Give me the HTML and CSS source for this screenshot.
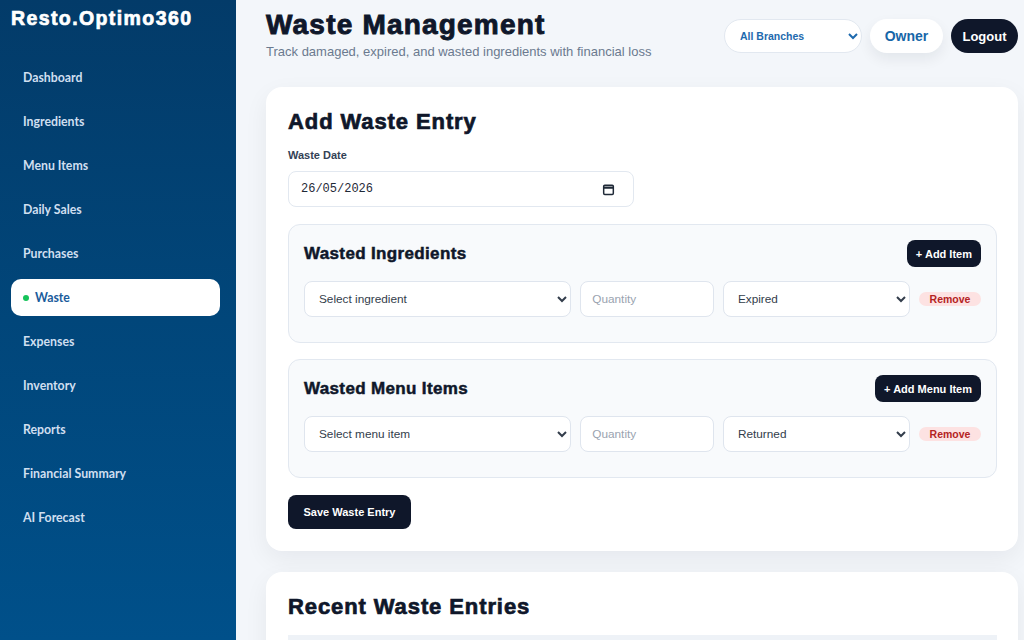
FILE: index.html
```html
<!DOCTYPE html>
<html lang="en">
<head>
    <meta charset="UTF-8">
    <meta name="viewport" content="width=device-width, initial-scale=1.0">
    <title>Waste Management - Resto.Optimo360</title>
    <link rel="stylesheet" href="styles.css">
</head>
<body>
    <aside class="sidebar">
        <div class="logo">Resto.Optimo360</div>
        <nav>
            <ul>
                <li><a href="#">Dashboard</a></li>
                <li><a href="#">Ingredients</a></li>
                <li><a href="#">Menu Items</a></li>
                <li><a href="#">Daily Sales</a></li>
                <li><a href="#">Purchases</a></li>
                <li><a href="#" class="active"><span class="dot"></span>Waste</a></li>
                <li><a href="#">Expenses</a></li>
                <li><a href="#">Inventory</a></li>
                <li><a href="#">Reports</a></li>
                <li><a href="#">Financial Summary</a></li>
                <li><a href="#">AI Forecast</a></li>
            </ul>
        </nav>
    </aside>
    <main class="main">
        <header class="topbar">
            <div class="title-block">
                <h1>Waste Management</h1>
                <p>Track damaged, expired, and wasted ingredients with financial loss</p>
            </div>
            <div class="top-actions">
                <select class="branch-select">
                    <option>All Branches</option>
                </select>
                <span class="role-pill">Owner</span>
                <button class="btn-dark logout">Logout</button>
            </div>
        </header>

        <section class="card">
            <h2>Add Waste Entry</h2>
            <label class="field-label" for="waste-date">Waste Date</label>
            <div class="date-input">
                <input type="text" id="waste-date" value="26/05/2026">
                <svg width="13" height="13" viewBox="0 0 14 14" fill="none" stroke="#1f2937" stroke-width="1.6">
                    <rect x="1.8" y="2.3" width="10.4" height="10" rx="1.2"/>
                    <line x1="1.8" y1="5" x2="12.2" y2="5" stroke-width="2.4"/>
                </svg>
            </div>

            <div class="sub-box">
                <div class="sub-head">
                    <h3>Wasted Ingredients</h3>
                    <button class="btn-dark btn-small">+ Add Item</button>
                </div>
                <div class="entry-row">
                    <select class="field"><option>Select ingredient</option></select>
                    <input type="number" class="field" placeholder="Quantity">
                    <select class="field"><option>Expired</option></select>
                    <span class="remove">Remove</span>
                </div>
            </div>

            <div class="sub-box">
                <div class="sub-head">
                    <h3>Wasted Menu Items</h3>
                    <button class="btn-dark btn-small">+ Add Menu Item</button>
                </div>
                <div class="entry-row">
                    <select class="field"><option>Select menu item</option></select>
                    <input type="number" class="field" placeholder="Quantity">
                    <select class="field"><option>Returned</option></select>
                    <span class="remove">Remove</span>
                </div>
            </div>

            <button class="btn-dark save">Save Waste Entry</button>
        </section>

        <section class="card">
            <h2>Recent Waste Entries</h2>
            <div class="table-head"></div>
        </section>
    </main>
</body>
</html>
```

FILE: styles.css
```css
* {
    box-sizing: border-box;
}
html, body {
    height: 100%;
}
body {
    margin: 0;
    font-family: "Liberation Sans", Arial, sans-serif;
    background-color: #f3f6fa;
    color: #0f172a;
    display: flex;
    overflow: hidden;
}
.sidebar {
    width: 236px;
    flex-shrink: 0;
    height: 100vh;
    background: linear-gradient(180deg, #033b69 0%, #01467a 50%, #00508a 100%);
    padding: 7px 16px 0 11px;
}
.logo {
    color: white;
    font-size: 19.5px;
    font-weight: bold;
    line-height: 22px;
    letter-spacing: 1.4px;
    -webkit-text-stroke: 0.7px white;
    margin-bottom: 30px;
}
.sidebar ul {
    list-style-type: none;
    margin: 0;
    padding: 0;
    display: flex;
    flex-direction: column;
    gap: 7px;
}
.sidebar a {
    display: flex;
    align-items: center;
    height: 37px;
    padding: 0 12px;
    color: #d0dff0;
    text-decoration: none;
    font-family: Lato, "Liberation Sans", sans-serif;
    font-weight: bold;
    font-size: 12.3px;
    border-radius: 10px;
}
.sidebar a.active {
    background-color: white;
    color: #1a5c9c;
}
.dot {
    width: 6px;
    height: 6px;
    border-radius: 50%;
    background-color: #16c35a;
    margin-right: 6px;
}
.main {
    flex: 1;
    padding: 9px 6px 0 30px;
    display: flex;
    flex-direction: column;
    gap: 21px;
    min-width: 0;
}
.topbar {
    display: flex;
    justify-content: space-between;
    align-items: flex-start;
    margin-bottom: 7px;
}
.title-block h1 {
    margin: 0;
    font-size: 28px;
    line-height: 32px;
    font-weight: bold;
    letter-spacing: 1.2px;
    -webkit-text-stroke: 0.9px #0f172a;
    color: #0f172a;
}
.title-block p {
    margin: 3px 0 0;
    font-size: 13px;
    color: #6b7a8f;
}
.top-actions {
    display: flex;
    align-items: center;
    gap: 8px;
    margin-top: 10px;
}
.branch-select {
    width: 138px;
    height: 34px;
    border: 1px solid #e2e8f0;
    border-radius: 17px;
    background-color: white;
    color: #1e6aae;
    font-family: "Liberation Sans", Arial, sans-serif;
    font-weight: bold;
    font-size: 10.5px;
    padding: 0 10px 0 11px;
}
.role-pill {
    display: flex;
    align-items: center;
    justify-content: center;
    width: 73px;
    height: 34px;
    border-radius: 17px;
    background-color: white;
    color: #1766a8;
    font-weight: bold;
    font-size: 14px;
    box-shadow: 0 6px 14px rgba(15, 23, 42, 0.07);
}
.btn-dark {
    background-color: #0f172a;
    color: white;
    border: none;
    font-family: "Liberation Sans", Arial, sans-serif;
    font-weight: bold;
    cursor: pointer;
}
.logout {
    width: 67px;
    height: 34px;
    border-radius: 17px;
    font-size: 13px;
}
.card {
    background-color: white;
    border-radius: 16px;
    padding: 22px 21px 22px 22px;
    box-shadow: 0 8px 24px rgba(15, 23, 42, 0.06);
    display: flex;
    flex-direction: column;
    flex-shrink: 0;
}
.card h2 {
    margin: 0 0 14px;
    font-size: 22px;
    line-height: 26px;
    font-weight: bold;
    letter-spacing: 0.9px;
    -webkit-text-stroke: 0.7px #0f172a;
    color: #0f172a;
}
.field-label {
    font-size: 11px;
    font-weight: bold;
    color: #334155;
    margin-bottom: 10px;
}
.date-input {
    width: 346px;
    height: 36px;
    border: 1px solid #e2e8f0;
    border-radius: 8px;
    padding: 0 18px 0 12px;
    margin-bottom: 17px;
    display: flex;
    align-items: center;
    justify-content: space-between;
    background-color: white;
}
.date-input input {
    border: none;
    outline: none;
    padding: 0;
    width: 120px;
    font-family: "Liberation Mono", monospace;
    font-size: 12px;
    color: #1f2937;
    background: transparent;
}
.sub-box {
    background-color: #f8fafc;
    border: 1px solid #e2e8f0;
    border-radius: 12px;
    padding: 15px 15px 25px;
    margin-bottom: 16px;
}
.sub-head {
    display: flex;
    justify-content: space-between;
    align-items: center;
    margin-bottom: 14px;
}
.sub-head h3 {
    margin: 0;
    font-size: 17px;
    font-weight: bold;
    letter-spacing: 0.35px;
    -webkit-text-stroke: 0.5px #0f172a;
    color: #0f172a;
}
.btn-small {
    height: 27px;
    padding: 0 9px;
    border-radius: 8px;
    font-size: 11px;
}
.entry-row {
    display: grid;
    grid-template-columns: 2fr 1fr 1.4fr 62px;
    gap: 9px;
    align-items: center;
}
.field {
    height: 36px;
    width: 100%;
    border: 1px solid #dfe5ee;
    border-radius: 8px;
    background-color: white;
    font-family: "Liberation Sans", Arial, sans-serif;
    font-size: 11.8px;
    color: #333d4b;
    padding: 0 10px 0 10px;
}
input.field {
    padding-left: 11px;
}
.field::placeholder {
    color: #9aa3b0;
}
.remove {
    display: block;
    text-align: center;
    background-color: #fde2e2;
    color: #b42323;
    font-size: 10.5px;
    font-weight: bold;
    border-radius: 7px;
    padding: 1px 0;
}
.save {
    align-self: flex-start;
    height: 34px;
    width: 123px;
    margin-top: 1px;
    border-radius: 8px;
    font-size: 11px;
}
.table-head {
    height: 20px;
    background-color: #eef2f7;
    margin-top: 1px;
}
```
